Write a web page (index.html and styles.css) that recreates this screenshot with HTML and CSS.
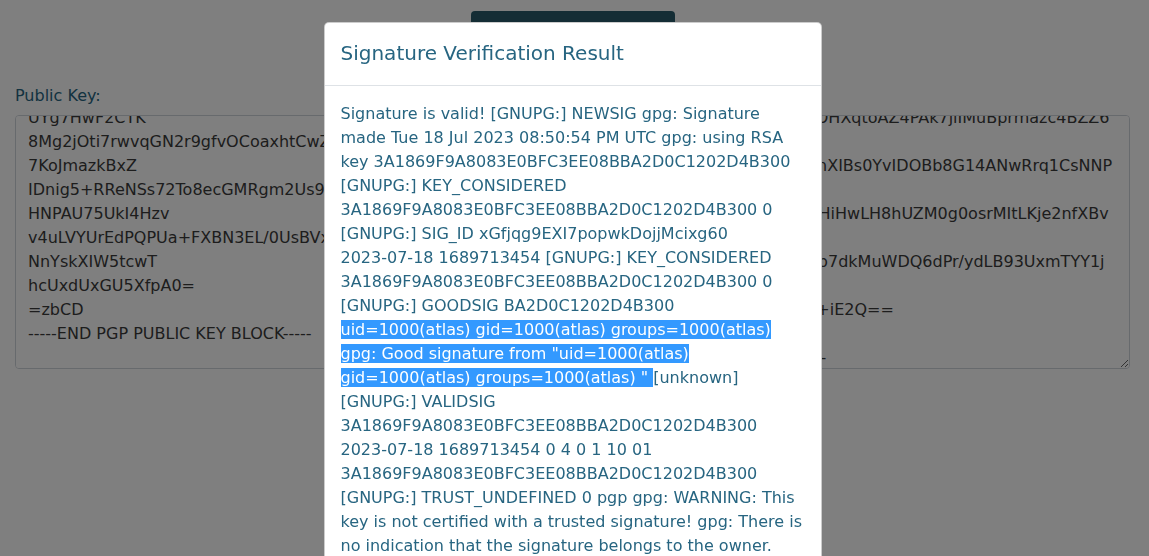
FILE: index.html
```html
<!DOCTYPE html>
<html lang="en">
<head>
<meta charset="utf-8">
<title>PGP Signature Verification</title>
<link rel="stylesheet" href="styles.css">
</head>
<body>
<main class="page">
  <div class="actions">
    <button class="btn-verify" type="button">Verify Signature</button>
  </div>
  <form class="fields">
    <div class="field">
      <label for="pubkey">Public Key:</label>
      <textarea id="pubkey" rows="10" data-scroll="136">-----BEGIN PGP PUBLIC KEY BLOCK-----

mQGNBGS2+kMBDADHr4pYq2xW9vT0nLk8JcE5sF3u
Ko4tP9xWm2Rz
f3Lq8Vn0YtB6cXk2HdJ9sWa7mE4Pu1zRiGo5Qb
UYg7HwF2CTK
8Mg2jOti7rwvqGN2r9gfvOCoaxhtCwZe4Hq1s
7KoJmazkBxZ
IDnig5+RReNSs72To8ecGMRgm2Us9fT0pLw3
HNPAU75UkI4Hzv
v4uLVYUrEdPQPUa+FXBN3EL/0UsBVxk8Qe2
NnYskXIW5tcwT
hcUxdUxGU5XfpA0=
=zbCD
-----END PGP PUBLIC KEY BLOCK-----
</textarea>
    </div>
    <div class="field">
      <label for="signature">Signature:</label>
      <textarea id="signature" rows="10" data-scroll="112">-----BEGIN PGP SIGNATURE-----

iQGzBAABCgAdFiEEOhhp+agIPgv8PuCLui0M
EgLUswAFAmS2
mQGNBGS2vbUBDADNRz9OHXqtoAZ4PAk7jiIMuBprmazc4BZZ6
Xb4Tq1wE
Kp3sW9dLq0VbN2xTfGuR1nXIBs0YvIDOBb8G14ANwRrq1CsNNP
cV8yHu2A
7HcYo2aZ5mE1wQ8vPjDA9HiHwLH8hUZM0g0osrMItLKje2nfXBv
Qm3Rf0Zk
Xn4gVe6BxS0hRkK5AXqN8b7dkMuWDQ6dPr/ydLB93UxmTYY1j
Ls7Pd4Ye
Jd8WmY1tLs3OaGv7pZ2hT+iE2Q==
=Vx4q
-----END PGP SIGNATURE-----</textarea>
    </div>
  </form>
</main>

<div class="backdrop"></div>
<div class="modal" role="dialog" aria-labelledby="result-title">
  <div class="modal-dialog">
    <div class="modal-content">
      <div class="modal-header">
        <h5 class="modal-title" id="result-title">Signature Verification Result</h5>
      </div>
      <div class="modal-body">Signature is valid! [GNUPG:] NEWSIG gpg: Signature made Tue 18 Jul 2023 08:50:54 PM UTC gpg: using RSA key 3A1869F9A8083E0BFC3EE08BBA2D0C1202D4B300 [GNUPG:] KEY_CONSIDERED 3A1869F9A8083E0BFC3EE08BBA2D0C1202D4B300 0 [GNUPG:] SIG_ID xGfjqg9EXI7popwkDojjMcixg60 <span class="nw">2023-07-18</span> 1689713454 [GNUPG:] KEY_CONSIDERED 3A1869F9A8083E0BFC3EE08BBA2D0C1202D4B300 0 [GNUPG:] GOODSIG BA2D0C1202D4B300 <span class="sel">uid=1000(atlas) gid=1000(atlas) groups=1000(atlas) gpg: Good signature from "uid=1000(atlas) gid=1000(atlas) groups=1000(atlas) " </span>[unknown] [GNUPG:] VALIDSIG 3A1869F9A8083E0BFC3EE08BBA2D0C1202D4B300 <span class="nw">2023-07-18</span> 1689713454 0 4 0 1 10 01 3A1869F9A8083E0BFC3EE08BBA2D0C1202D4B300 [GNUPG:] TRUST_UNDEFINED 0 pgp gpg: WARNING: This key is not certified with a trusted signature! gpg: There is no indication that the signature belongs to the owner. Primary key fingerprint: 3A18 69F9 A808 3E0B FC3E E08B BA2D 0C12 02D4 B300</div>
    </div>
  </div>
</div>
<script src="script.js"></script>
</body>
</html>
```

FILE: styles.css
```css
* {
  box-sizing: border-box;
}

html,
body {
  margin: 0;
  height: 100%;
}

body {
  font-family: "DejaVu Sans", "Noto Sans", sans-serif;
  font-size: 16px;
  line-height: 1.5;
  color: #276581;
  background: #ffffff;
  overflow: hidden;
}

.page {
  padding: 11px 19px 0 15px;
}

.actions {
  display: flex;
  justify-content: center;
}

.btn-verify {
  width: 204px;
  height: 38px;
  border: 0;
  border-radius: 4px;
  background: #285a6a;
  color: #ffffff;
  font: inherit;
}

.fields {
  display: grid;
  grid-template-columns: 1fr 1fr;
  column-gap: 30px;
  margin-top: 35px;
}

.field label {
  display: block;
  margin-bottom: 7px;
}

.field textarea {
  display: block;
  width: 100%;
  height: 254px;
  margin: 0;
  padding: 6px 12px;
  border: 1px solid #ced4da;
  border-radius: 4px;
  background: #ffffff;
  color: #3b3b3b;
  font: inherit;
}

.backdrop {
  position: fixed;
  inset: 0;
  background: #000000;
  opacity: 0.5;
}

.modal {
  position: fixed;
  inset: 0;
  overflow: hidden;
  padding-right: 4px;
}

.modal-dialog {
  width: 498px;
  margin: 22px auto 0;
}

.modal-content {
  background: #ffffff;
  border: 1px solid rgba(0, 0, 0, 0.2);
  border-radius: 5px;
}

.modal-header {
  padding: 15px 16px 17px;
  border-bottom: 1px solid #dee2e6;
}

.modal-title {
  margin: 0;
  font-size: 20px;
  font-weight: 500;
  line-height: 1.5;
}

.modal-body {
  padding: 16px;
}

.nw {
  white-space: nowrap;
}

.sel {
  background: #3399ff;
  color: #ffffff;
}
```

FILE: script.js
```js
document.querySelectorAll('textarea[data-scroll]').forEach(function (t) {
  t.scrollTop = Number(t.dataset.scroll);
});
```
